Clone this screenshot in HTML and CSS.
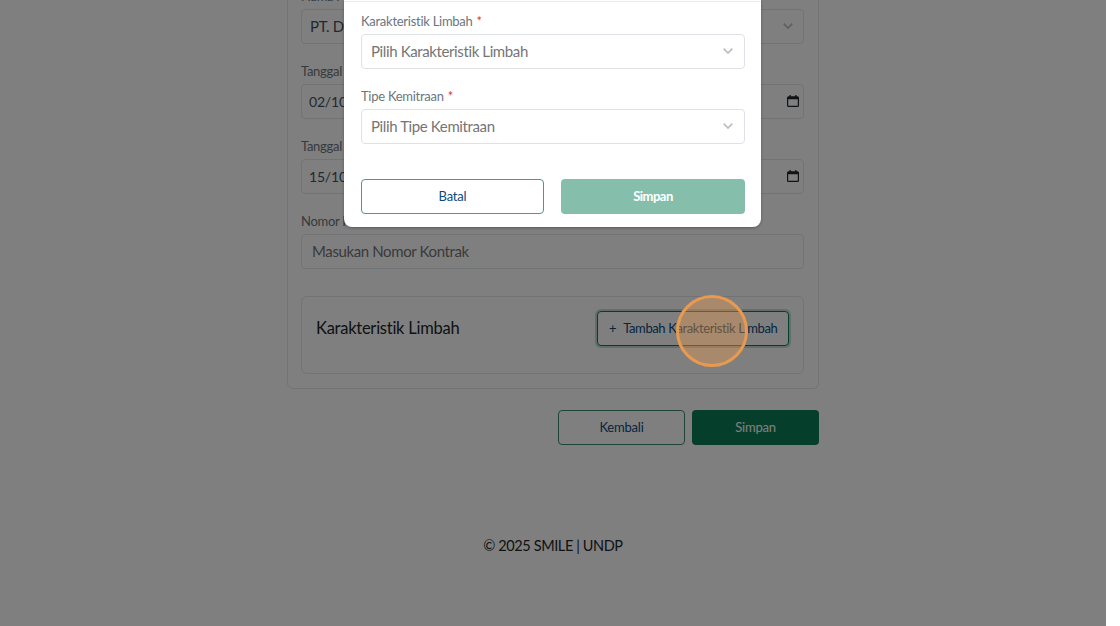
FILE: index.html
```html
<!DOCTYPE html>
<html lang="en">
<head>
  <meta charset="UTF-8">
  <title>Tambah Kontrak</title>
  <link rel="stylesheet" href="styles.css">
</head>
<body>

<!-- Page behind the modal -->
<div class="page">
  <div class="form-card">
    <div class="field">
      <label class="field-label">Nama Mitra</label>
      <div class="input input-select">
        <span class="input-value">PT. Dwi Karya</span>
        <svg class="chevron" viewBox="0 0 10 6"><path d="M.7.7L5 5 9.300.7"/></svg>
      </div>
    </div>
    <div class="field">
      <label class="field-label">Tanggal Mulai</label>
      <div class="input input-date">
        <span class="input-value">02/10/2025</span>
        <svg class="calendar" viewBox="0 0 12 12"><path d="M2.500 0h1.300v1.200h4.400V0h1.300v1.200h1A1.500 1.500 0 0 1 12 2.700v7.800A1.500 1.500 0 0 1 10.500 12h-9A1.500 1.500 0 0 1 0 10.500V2.700a1.500 1.500 0 0 1 1.500-1.500h1zM1.200 4.300v6.500h9.600V4.300z"/></svg>
      </div>
    </div>
    <div class="field">
      <label class="field-label">Tanggal Selesai</label>
      <div class="input input-date">
        <span class="input-value">15/10/2025</span>
        <svg class="calendar" viewBox="0 0 12 12"><path d="M2.500 0h1.300v1.200h4.400V0h1.300v1.200h1A1.500 1.500 0 0 1 12 2.700v7.800A1.500 1.500 0 0 1 10.500 12h-9A1.500 1.500 0 0 1 0 10.500V2.700a1.500 1.500 0 0 1 1.500-1.500h1zM1.200 4.300v6.500h9.600V4.300z"/></svg>
      </div>
    </div>
    <div class="field">
      <label class="field-label">Nomor Kontrak</label>
      <div class="input">
        <span class="input-placeholder">Masukan Nomor Kontrak</span>
      </div>
    </div>

    <div class="waste-card">
      <div class="waste-title">Karakteristik Limbah</div>
      <button class="btn btn-add"><span class="plus">+</span>Tambah Karakteristik Limbah</button>
    </div>
  </div>

  <div class="page-actions">
    <button class="btn btn-outline">Kembali</button>
    <button class="btn btn-solid">Simpan</button>
  </div>

  <div class="footer">© 2025 SMILE | UNDP</div>
</div>

<!-- Dark overlay + modal -->
<div class="backdrop"></div>
<div class="modal">
  <div class="modal-divider"></div>
  <div class="modal-field">
    <label class="modal-label">Karakteristik Limbah <span class="req">*</span></label>
    <div class="modal-select">
      <span>Pilih Karakteristik Limbah</span>
      <svg class="chevron" viewBox="0 0 10 6"><path d="M.7.7L5 5 9.300.7"/></svg>
    </div>
  </div>
  <div class="modal-field">
    <label class="modal-label">Tipe Kemitraan <span class="req">*</span></label>
    <div class="modal-select">
      <span>Pilih Tipe Kemitraan</span>
      <svg class="chevron" viewBox="0 0 10 6"><path d="M.7.7L5 5 9.300.7"/></svg>
    </div>
  </div>
  <div class="modal-actions">
    <button class="btn btn-cancel">Batal</button>
    <button class="btn btn-disabled">Simpan</button>
  </div>
</div>

<!-- Click marker from the recording -->
<div class="click-marker"></div>

</body>
</html>
```

FILE: styles.css
```css
* { margin: 0; padding: 0; box-sizing: border-box; }
html, body { height: 100%; overflow: hidden; }
body { font-family: 'Lato', sans-serif; background: white; color: #212529; position: relative; }

/* Page behind the modal */
.page {
  width: 1106px;
  height: 626px;
  overflow: hidden;
}
.form-card {
  width: 532px;
  margin: -40px 0 0 287px;
  padding: 27px 14px 14px 13px;
  border: 1px solid #e4e6e9;
  border-radius: 6px;
}
.field { margin-bottom: 19px; }
.field-label {
  display: block;
  font-size: 13px;
  letter-spacing: -0.27px;
  line-height: 17px;
  margin-bottom: 4px;
  color: #6c757d;
}
.input {
  height: 35px;
  border: 1px solid #e4e6e9;
  border-radius: 4px;
  padding: 0 10px 1px;
  display: flex;
  align-items: center;
  justify-content: space-between;
  font-size: 15px;
  letter-spacing: -0.38px;
}
.input-select { padding: 0 10px 1px 8px; }
.input-date { padding: 0 4px 1px 7px; font-size: 14px; letter-spacing: -0.2px; }
.input-value { color: #495057; }
.input-placeholder { color: #757575; }
.chevron { width: 10px; height: 6px; fill: none; stroke: #bdbdbd; stroke-width: 1.7; }
.calendar { width: 12px; height: 12px; fill: #212529; margin-top: -1px; }

.waste-card {
  margin-top: 27px;
  height: 78px;
  padding: 14px 14px 0;
  border: 1px solid #e4e6e9;
  border-radius: 6px;
  display: flex;
  justify-content: space-between;
  align-items: flex-start;
}
.waste-title { font-size: 16.500px; letter-spacing: -0.25px; line-height: 35px; color: #212529; }

.btn {
  height: 35px;
  padding-bottom: 1px;
  font-family: inherit;
  font-size: 13px;
  letter-spacing: -0.2px;
  border-radius: 4px;
  cursor: pointer;
  background: white;
  white-space: nowrap;
}
.btn-add {
  width: 192px;
  border: 1px solid #0a7f57;
  color: #0a4a7c;
  box-shadow: 0 0 0 2px rgba(10,127,87,0.25);
  padding: 0 10px 1px;
  letter-spacing: -0.38px;
  text-align: left;
}
.plus { margin: 0 7px 0 1px; }
.page-actions {
  width: 532px;
  margin: 21px 0 0 287px;
  display: flex;
  justify-content: flex-end;
  gap: 7px;
}
.btn-outline { width: 127px; border: 1px solid #3f8a76; color: #0a4a7c; }
.btn-solid { width: 127px; border: none; background: #0a7f57; color: white; }
.footer {
  margin-top: 91px;
  font-size: 14.500px;
  letter-spacing: -0.4px;
  line-height: 20px;
  text-align: center;
  color: #212529;
}

/* Overlay + modal */
.backdrop {
  position: absolute;
  top: 0;
  left: 0;
  width: 1106px;
  height: 626px;
  background: rgba(0,0,0,0.5);
}
.modal {
  position: absolute;
  top: 0;
  left: 344px;
  width: 417px;
  height: 227px;
  padding: 0 16px 0 17px;
  background: white;
  border-radius: 0 0 8px 8px;
  box-shadow: 0 1px 3px rgba(0,0,0,0.3);
}
.modal-divider {
  height: 2px;
  margin: 0 -16px 0 -17px;
  border-bottom: 1px solid #e9ecef;
}
.modal-field { padding-top: 11px; height: 75px; }
.modal-label {
  display: block;
  font-size: 13px;
  letter-spacing: -0.27px;
  line-height: 17px;
  margin-bottom: 4px;
  color: #6c757d;
}
.req { color: #dc3545; margin-left: 1px; }
.modal-select {
  height: 35px;
  padding: 0 11px 1px 9px;
  border: 1px solid #dee2e6;
  border-radius: 4px;
  display: flex;
  align-items: center;
  justify-content: space-between;
  font-size: 15px;
  letter-spacing: -0.38px;
  color: #757575;
}
.modal-actions {
  margin-top: 27px;
  display: flex;
  gap: 17px;
}
.btn-cancel { width: 183px; border: 1px solid #4a9a87; color: #0a4a7c; }
.btn-disabled { width: 184px; border: none; background: #85bfab; color: white; font-weight: 700; letter-spacing: -0.5px; }

.click-marker {
  position: absolute;
  left: 676px;
  top: 295px;
  width: 72px;
  height: 72px;
  border: 3px solid #e89a50;
  border-radius: 50%;
  background: rgba(240,155,75,0.38);
}
```
